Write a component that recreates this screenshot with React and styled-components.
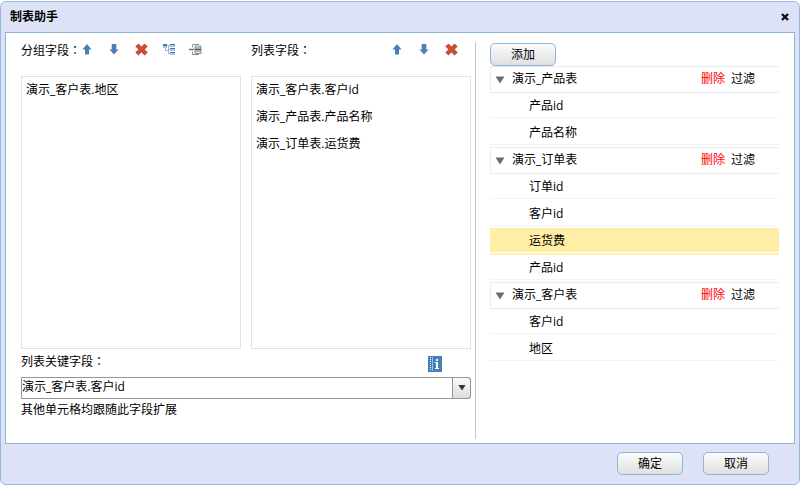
import React, { useState } from "react";
import styled, { createGlobalStyle } from "styled-components";

const GlobalStyle = createGlobalStyle`
  * { box-sizing: border-box; }
  body {
    margin: 0;
    background: #fff;
    color: #000;
    font: 12px/16px "Open Sans", "Noto Sans CJK SC", sans-serif;
  }
  button, select { font: inherit; color: inherit; }
`;

const Page = styled.div`
  display: flex;
  min-height: 100vh;
  padding: 1px 0;
`;

const Dialog = styled.section`
  flex: 1;
  min-width: 0;
  display: flex;
  flex-direction: column;
  padding: 0 4px;
  background: #dde2f6;
  border: 1px solid #96b9dc;
  border-radius: 6px;
`;

const TitleBar = styled.header`
  display: flex;
  align-items: center;
  justify-content: space-between;
  height: 30px;
  padding: 0 6px 0 5px;
`;

const Title = styled.h1`
  margin: 0;
  font-size: 12px;
  font-weight: 700;
`;

const PlainButton = styled.button`
  display: block;
  padding: 0;
  border: 0;
  background: none;
  cursor: pointer;
  color: ${(p) => (p.$danger ? "#f00" : "inherit")};
  svg { display: block; }
`;

const Body = styled.div`
  flex: 1;
  display: grid;
  grid-template-columns: minmax(0, 470fr) minmax(0, 318fr);
  padding: 9px 0 4px;
  background: #fff;
  border: 1px solid #8fb4da;
`;

const FieldsPane = styled.div`
  display: flex;
  flex-direction: column;
  padding: 0 4px 0 15px;
  border-right: 1px solid #c4c4c4;
`;

const Lists = styled.div`
  flex: 1;
  display: grid;
  grid-template-columns: 1fr 1fr;
  gap: 10px;
`;

const FieldColumn = styled.div`
  display: flex;
  flex-direction: column;
`;

const ColumnHeader = styled.div`
  display: flex;
  align-items: center;
  justify-content: ${(p) => (p.$spread ? "space-between" : "flex-start")};
  height: 16px;
  margin-bottom: 18px;
  padding-right: 13px;
`;

const Label = styled.span``;

const Colon = styled.span`
  font-family: "Noto Sans CJK TC", sans-serif;
`;

const Tools = styled.div`
  display: flex;
  gap: 14px;
  padding-bottom: 2px;
`;

const FieldList = styled.ul`
  flex: 1;
  margin: 0;
  padding: 0 4px;
  list-style: none;
  border: 1px solid #e2e2e2;
`;

const Field = styled.li`
  height: 27px;
  line-height: 25px;
`;

const KeyHeader = styled.div`
  display: flex;
  justify-content: space-between;
  height: 28px;
  padding: 4px 29px 2px 0;
`;

const HelpButton = styled(PlainButton)`
  align-self: center;
`;

const Combo = styled.div`
  display: grid;
  grid-template-columns: 1fr 19px;
  height: 22px;
`;

const KeySelect = styled.select`
  grid-area: 1 / 1 / 2 / 3;
  appearance: none;
  width: 100%;
  padding: 0 20px 2px 0;
  background: #fff;
  border: 1px solid #969696;
  border-radius: 0 3px 3px 0;
`;

const ComboArrow = styled.span`
  grid-area: 1 / 2;
  display: grid;
  place-items: center;
  padding-bottom: 2px;
  pointer-events: none;
  border: 1px solid #969696;
  border-radius: 0 3px 3px 0;
  background: linear-gradient(#fafafa, #dcdcdc);
`;

const Hint = styled.p`
  margin: 3px 0 21px;
`;

const SourcePane = styled.div`
  padding: 1px 15px 0 14px;
`;

const PushButton = styled.button`
  display: block;
  width: 66px;
  height: 23px;
  padding: 0;
  border: 1px solid #8fb4dc;
  border-radius: 5px;
  background: linear-gradient(#fbfbfb, #e0e0e0);
  cursor: pointer;
`;

const Group = styled.section``;

const GroupHeader = styled.div`
  display: flex;
  align-items: center;
  height: 27px;
  padding: 0 24px 2px 4px;
  border: solid #ececec;
  border-width: 1px 0 1px 1px;
`;

const GroupToggle = styled(PlainButton)`
  flex: 1;
  display: flex;
  align-items: center;
  gap: 7px;
`;

const Actions = styled.div`
  display: flex;
  gap: 6px;
`;

const Items = styled.ul`
  margin: 0;
  padding: 0;
  list-style: none;
`;

const Item = styled.li`
  height: 27px;
  padding-left: 39px;
  line-height: 26px;
  cursor: pointer;
  border-bottom: 2px solid ${(p) => (p.$selected ? "#fff0ae" : "#fff")};
  background: ${(p) => (p.$selected ? "#ffeea6" : "#fff")};
  box-shadow: inset 0 -1px ${(p) => (p.$selected ? "#fffdf2" : "#f4f4f4")};
`;

const Footer = styled.footer`
  display: flex;
  justify-content: flex-end;
  gap: 20px;
  padding: 8px 26px 9px 0;
`;

const UpIcon = () => (
  <svg width="13" height="13" viewBox="0 0 13 13">
    <path d="M6 1 10.6 6.6H8V11.6H4V6.6H1.4Z" fill="#4c80b4" />
  </svg>
);

const DownIcon = () => (
  <svg width="13" height="13" viewBox="0 0 13 13">
    <path d="M6 11.6 10.6 6.6H8.3V1H3.7V6.6H1.4Z" fill="#4c80b4" />
  </svg>
);

const DeleteIcon = () => (
  <svg width="13" height="13" viewBox="0 0 13 13">
    <path d="M3.5 1 6.5 4 9.5 1 12.2 3.4 9.3 6.4 12.2 9.5 9.6 12 6.5 9 3.4 12 .8 9.5 3.8 6.4.8 3.4Z" fill="#d24a30" stroke="#a93420" strokeWidth=".7" />
  </svg>
);

const TreeIcon = () => (
  <svg width="13" height="13" viewBox="0 0 13 13">
    <path d="M5 2.5H8M6.5 3V11M6 6.5H8M6 10.5H8M3.5 5V7.5H6" fill="none" stroke="#9bb7d6" />
    <path d="M1 1H5V5H1ZM8 1H13V4H8ZM8 5H13V8H8ZM8 9H13V12H8Z" fill="#a9c6e5" />
    <path d="M1 1H5V3H1ZM8 1H13V2H8ZM8 5H13V6H8ZM8 9H13V10H8Z" fill="#4779b0" />
  </svg>
);

const MergeIcon = () => (
  <svg width="13" height="13" viewBox="0 0 13 13">
    <path d="M0 6.5H5" stroke="#6d7980" strokeWidth="1.5" />
    <path d="M3.5 4.5V1.5H10M3.5 8.5V11.5H10" fill="none" stroke="#8b969c" />
    <path d="M6 3H12V10.5H6Z" fill="#dde2e4" stroke="#8b969c" />
    <path d="M6 5H12M6 8H12" stroke="#7e8a91" />
    <path d="M6 6.5H12" stroke="#4d565c" />
  </svg>
);

const HelpIcon = () => (
  <svg width="14" height="16" viewBox="0 0 14 16">
    <path d="M0 0H14V16H0Z" fill="#4580bd" />
    <path d="M2.5 1V15" stroke="#fff" strokeDasharray="1 1" />
    <path d="M4.5 1V15" stroke="#9fc0e0" />
    <path d="M8 3H10V5H8ZM7 6H10V12H11V13H7V12H8V7H7Z" fill="#fff" />
  </svg>
);

const CloseIcon = () => (
  <svg width="8" height="9" viewBox="0 0 8 9">
    <path d="M1 1 7 7M7 1 1 7" stroke="#111" strokeWidth="2.4" />
  </svg>
);

const Triangle = ({ size = 10, color = "#6e6e6e", closed }) => (
  <svg width={size} height={size} viewBox="0 0 10 10">
    <path d={closed ? "M2 0 9 5 2 10Z" : "M.5 2.5H9.5L5 9.5Z"} fill={color} />
  </svg>
);

const TOOLS = {
  up: ["上移", UpIcon],
  down: ["下移", DownIcon],
  remove: ["移除", DeleteIcon],
  tree: ["层级", TreeIcon],
  merge: ["合并", MergeIcon],
};

const SOURCES = [
  { name: "演示_产品表", fields: ["产品id", "产品名称"] },
  { name: "演示_订单表", fields: ["订单id", "客户id", "运货费", "产品id"] },
  { name: "演示_客户表", fields: ["客户id", "地区"] },
];

const LIST_FIELDS = ["演示_客户表.客户id", "演示_产品表.产品名称", "演示_订单表.运货费"];

function Column({ label, tools, fields, spread }) {
  return (
    <FieldColumn>
      <ColumnHeader $spread={spread}>
        <Label>
          {label}
          <Colon lang="zh-TW">：</Colon>
        </Label>
        <Tools>
          {tools.map((key) => {
            const [name, Icon] = TOOLS[key];
            return (
              <PlainButton key={key} type="button" aria-label={name}>
                <Icon />
              </PlainButton>
            );
          })}
        </Tools>
      </ColumnHeader>
      <FieldList aria-label={label}>
        {fields.map((f) => (
          <Field key={f}>{f}</Field>
        ))}
      </FieldList>
    </FieldColumn>
  );
}

function SourceGroup({ name, fields, selected, onSelect }) {
  const [open, setOpen] = useState(true);
  return (
    <Group>
      <GroupHeader>
        <GroupToggle type="button" aria-expanded={open} onClick={() => setOpen(!open)}>
          <Triangle closed={!open} />
          {name}
        </GroupToggle>
        <Actions>
          <PlainButton type="button" $danger>删除</PlainButton>
          <PlainButton type="button">过滤</PlainButton>
        </Actions>
      </GroupHeader>
      {open && (
        <Items>
          {fields.map((f) => (
            <Item key={f} $selected={selected === `${name}.${f}`} onClick={() => onSelect(`${name}.${f}`)}>
              {f}
            </Item>
          ))}
        </Items>
      )}
    </Group>
  );
}

export default function App() {
  const [selected, setSelected] = useState("演示_订单表.运货费");
  return (
    <Page>
      <GlobalStyle />
      <Dialog role="dialog" aria-labelledby="dialog-title">
        <TitleBar>
          <Title id="dialog-title">制表助手</Title>
          <PlainButton type="button" aria-label="关闭">
            <CloseIcon />
          </PlainButton>
        </TitleBar>
        <Body>
          <FieldsPane>
            <Lists>
              <Column label="分组字段" tools={["up", "down", "remove", "tree", "merge"]} fields={["演示_客户表.地区"]} />
              <Column label="列表字段" tools={["up", "down", "remove"]} fields={LIST_FIELDS} spread />
            </Lists>
            <KeyHeader>
              <label htmlFor="key-field">
                列表关键字段
                <Colon lang="zh-TW">：</Colon>
              </label>
              <HelpButton type="button" aria-label="说明">
                <HelpIcon />
              </HelpButton>
            </KeyHeader>
            <Combo>
              <KeySelect id="key-field">
                {LIST_FIELDS.map((f) => (
                  <option key={f}>{f}</option>
                ))}
              </KeySelect>
              <ComboArrow>
                <Triangle size={8} color="#333" />
              </ComboArrow>
            </Combo>
            <Hint>其他单元格均跟随此字段扩展</Hint>
          </FieldsPane>
          <SourcePane>
            <PushButton type="button">添加</PushButton>
            {SOURCES.map((s) => (
              <SourceGroup key={s.name} {...s} selected={selected} onSelect={setSelected} />
            ))}
          </SourcePane>
        </Body>
        <Footer>
          <PushButton type="button">确定</PushButton>
          <PushButton type="button">取消</PushButton>
        </Footer>
      </Dialog>
    </Page>
  );
}
